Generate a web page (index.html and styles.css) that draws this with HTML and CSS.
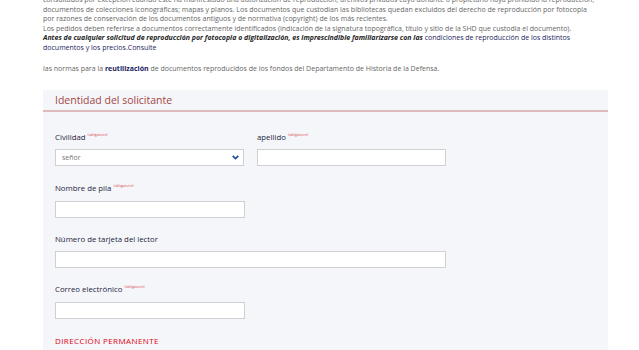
FILE: index.html
```html
<!DOCTYPE html>
<html lang="es">
<head>
  <meta charset="UTF-8">
  <title>Solicitud de reproducción</title>
  <link rel="stylesheet" href="styles.css">
</head>
<body>
  <div class="page">
    <div class="intro">
      <p>
        consultados por excepción cuando este ha manifestado una autorización de reproducción; archivos privados cuyo donante o propietario haya prohibido la reproducción;<br>
        documentos de colecciones iconográficas; mapas y planos. Los documentos que custodian las bibliotecas quedan excluidos del derecho de reproducción por fotocopia<br>
        por razones de conservación de los documentos antiguos y de normativa (copyright) de los más recientes.<br>
        Los pedidos deben referirse a documentos correctamente identificados (indicación de la signatura topográfica, título y sitio de la SHD que custodia el documento).<br>
        <strong><em>Antes de cualquier solicitud de reproducción por fotocopia o digitalización, es imprescindible familiarizarse con las</em></strong>
        <a href="#">condiciones de reproducción de los distintos<br>documentos y los precios.Consulte</a>
      </p>
      <p>las normas para la <a href="#" class="strong-link">reutilización</a> de documentos reproducidos de los fondos del Departamento de Historia de la Defensa.</p>
    </div>

    <section class="card">
      <h2 class="card-title">Identidad del solicitante</h2>
      <div class="card-body">
        <div class="row">
          <div class="field">
            <label for="civilidad">Civilidad <sup>(obligatoire)</sup></label>
            <div class="select-wrap">
              <select id="civilidad">
                <option>señor</option>
                <option>señora</option>
              </select>
              <svg class="chevron" viewBox="0 0 10 7" width="7" height="5"><path d="M1 1.2 L5 5 L9 1.2" fill="none" stroke="#1f4e9c" stroke-width="2.4"/></svg>
            </div>
          </div>
          <div class="field">
            <label for="apellido">apellido <sup>(obligatoire)</sup></label>
            <input type="text" id="apellido">
          </div>
        </div>
        <div class="field half">
          <label for="nombre">Nombre de pila <sup>(obligatoire)</sup></label>
          <input type="text" id="nombre">
        </div>
        <div class="field">
          <label for="tarjeta">Número de tarjeta del lector</label>
          <input type="text" id="tarjeta">
        </div>
        <div class="field half">
          <label for="correo">Correo electrónico <sup>(obligatoire)</sup></label>
          <input type="email" id="correo">
        </div>
        <h3 class="subhead">DIRECCIÓN PERMANENTE</h3>
      </div>
    </section>
  </div>
</body>
</html>
```

FILE: styles.css
```css
html,
body {
  height: 100%;
  overflow: hidden;
}

body {
  margin: 0;
  font-family: "Open Sans", "Liberation Sans", sans-serif;
  background: #fff;
  color: #666;
}

.page {
  margin-left: 43px;
  width: 565px;
}

.intro {
  margin-top: -5px;
  font-size: 7px;
  line-height: 9.5px;
  white-space: nowrap;
}

.intro p {
  margin: 0 0 12px;
}

.intro strong {
  color: #1e1e1e;
}

.intro a {
  color: #1b1b5e;
  text-decoration: none;
}

.intro .strong-link {
  font-weight: 700;
}

.card {
  margin-top: 16px;
  background: #f5f6fa;
  height: 260px;
  overflow: hidden;
}

.card-title {
  margin: 0;
  padding: 0 12px;
  height: 20px;
  line-height: 21px;
  font-size: 10.5px;
  font-weight: 400;
  color: #a4463f;
  border-bottom: 2px solid #dfbcbc;
}

.card-body {
  padding: 20px 12px 0;
  width: 391px;
}

.row {
  display: grid;
  grid-template-columns: 1fr 1fr;
  column-gap: 13px;
  margin-bottom: 1px;
}

.field {
  display: flex;
  flex-direction: column;
  margin-bottom: 16px;
}

.field.half {
  width: 190px;
}

label {
  font-size: 7.8px;
  line-height: 10px;
  font-weight: 500;
  color: #1c1c3a;
  margin-bottom: 7.5px;
}

label sup {
  font-size: 3.6px;
  line-height: 0;
  font-weight: 400;
  color: #d64545;
  vertical-align: 4px;
}

input,
select {
  display: block;
  box-sizing: border-box;
  height: 17px;
  width: 100%;
  margin: 0;
  border: 1px solid #cfcfd4;
  border-radius: 0;
  background: #fff;
  font-family: inherit;
}

.select-wrap {
  position: relative;
}

select {
  appearance: none;
  padding: 0 0 0 6px;
  font-size: 7px;
  color: #777;
}

.chevron {
  position: absolute;
  right: 5px;
  top: 6px;
}

.subhead {
  margin: 0;
  font-size: 8px;
  font-weight: 500;
  letter-spacing: 0.4px;
  color: #e1000f;
}
```
